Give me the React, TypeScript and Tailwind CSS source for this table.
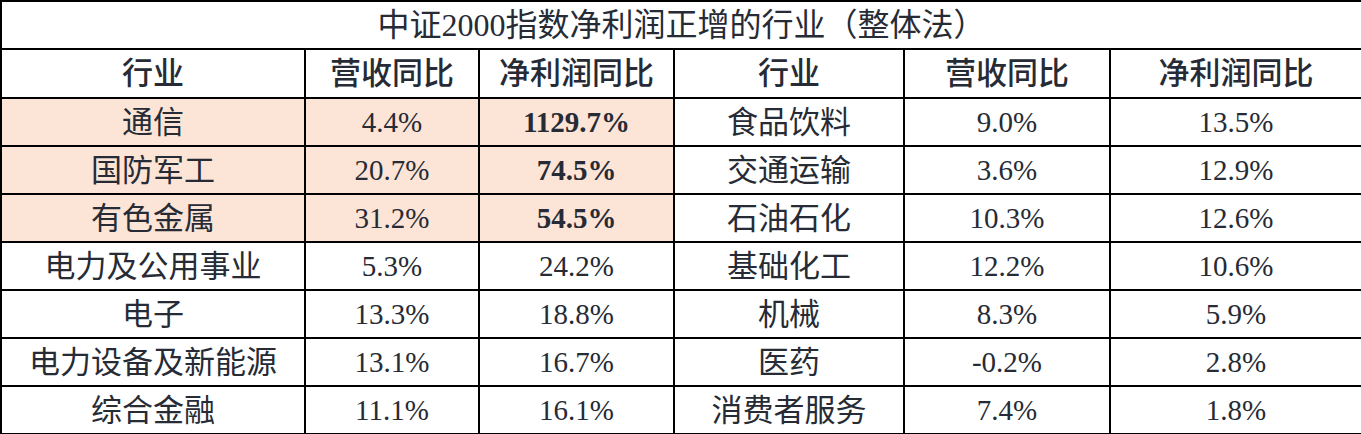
const left = [
  ['通信', '4.4%', '1129.7%', true],
  ['国防军工', '20.7%', '74.5%', true],
  ['有色金属', '31.2%', '54.5%', true],
  ['电力及公用事业', '5.3%', '24.2%', false],
  ['电子', '13.3%', '18.8%', false],
  ['电力设备及新能源', '13.1%', '16.7%', false],
  ['综合金融', '11.1%', '16.1%', false],
] as const

const right = [
  ['食品饮料', '9.0%', '13.5%'],
  ['交通运输', '3.6%', '12.9%'],
  ['石油石化', '10.3%', '12.6%'],
  ['基础化工', '12.2%', '10.6%'],
  ['机械', '8.3%', '5.9%'],
  ['医药', '-0.2%', '2.8%'],
  ['消费者服务', '7.4%', '1.8%'],
]

const cell = 'border-2 border-black text-center align-middle p-0 leading-none'
const txt = `${cell} text-[31px]`
const num = `${cell} text-[29px]`

export default function App() {
  return (
    <div className="w-[1361px] h-[434px] bg-white overflow-hidden font-['Liberation_Serif','Noto_Sans_CJK_SC',serif] text-[#262b35]">
      <table className="w-full border-collapse border-2 border-black table-fixed">
        <colgroup>
          <col className="w-[304px]" />
          <col className="w-[174px]" />
          <col className="w-[195px]" />
          <col className="w-[230px]" />
          <col className="w-[206px]" />
          <col className="w-[252px]" />
        </colgroup>
        <tbody>
          <tr className="h-[48px]">
            <td colSpan={6} className={`${cell} text-[32px]`}>
              中证2000指数净利润正增的行业（整体法）
            </td>
          </tr>
          <tr className="h-[49px]">
            {['行业', '营收同比', '净利润同比', '行业', '营收同比', '净利润同比'].map((h, i) => (
              <td key={i} className={`${txt} font-medium`}>
                {h}
              </td>
            ))}
          </tr>
          {left.map((r, i) => {
            const hl = r[3] ? 'bg-[#fce4d6]' : ''
            return (
              <tr key={i} className="h-[48px]">
                <td className={`${txt} ${hl}`}>{r[0]}</td>
                <td className={`${num} ${hl}`}>{r[1]}</td>
                <td className={`${num} ${hl} ${r[3] ? 'font-bold' : ''}`}>{r[2]}</td>
                <td className={txt}>{right[i][0]}</td>
                <td className={num}>{right[i][1]}</td>
                <td className={num}>{right[i][2]}</td>
              </tr>
            )
          })}
        </tbody>
      </table>
    </div>
  )
}
